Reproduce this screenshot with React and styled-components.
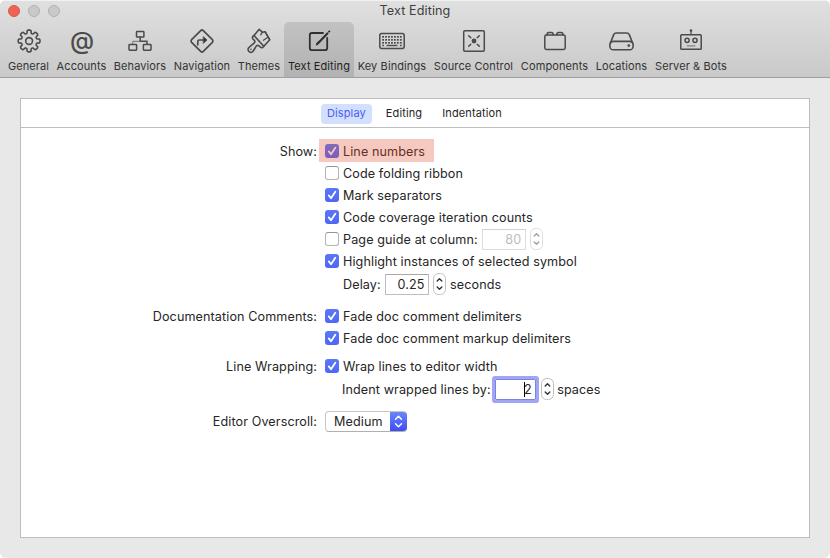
import React from "react";
import styled, { createGlobalStyle, css } from "styled-components";

const Global = createGlobalStyle`
  html, body { margin: 0; padding: 0; background: #fff; }
  * { box-sizing: border-box; }
`;

const Window = styled.div`
  width: 830px;
  height: 558px;
  display: flex;
  flex-direction: column;
  overflow: hidden;
  border-radius: 6px;
  background: #e8e8e8;
  font-family: Inter, "Liberation Sans", sans-serif;
  font-size: 12.6px;
  letter-spacing: 0.1px;
  color: #262626;
  white-space: nowrap;
`;

const Header = styled.header`
  height: 78px;
  flex: none;
  border-top: 1px solid #f2f2f2;
  border-bottom: 1px solid #9f9f9f;
  background: linear-gradient(#e0e0e0, #c9c9c9);
`;

const TitleBar = styled.div`
  height: 21px;
  padding-bottom: 1px;
  display: grid;
  grid-template-columns: 1fr auto 1fr;
  align-items: center;
  color: #404040;
`;

const Lights = styled.div`
  display: flex;
  gap: 8px;
  padding-left: 8px;
`;

const Light = styled.span`
  width: 12px;
  height: 12px;
  border-radius: 50%;
  background: ${(p) => (p.$close ? "#ee6355" : "#c9c9c9")};
  border: 1px solid ${(p) => (p.$close ? "#d9574a" : "#b1b1b1")};
`;

const Title = styled.span`
  line-height: 20px;
`;

const Toolbar = styled.nav`
  display: flex;
  padding-left: 4px;
`;

const ToolItem = styled.div`
  width: ${(p) => p.$width}px;
  height: 55px;
  padding-top: 5px;
  border-radius: 5px 5px 0 0;
  font-size: 11px;
  line-height: 22px;
  letter-spacing: 0.1px;
  color: #333;
  display: flex;
  flex-direction: column;
  ${(p) =>
    p.$selected &&
    css`
      background: linear-gradient(#c2c2c2, #b2b2b2);
      color: #1f1f1f;
    `}
`;

const ToolLabel = styled.span`
  align-self: center;
`;

const Icon = styled.svg`
  width: 28px;
  height: 28px;
  flex: none;
  overflow: visible;
  margin-left: ${(p) => p.$inset}px;
  fill: none;
  stroke: ${(p) => (p.$selected ? "#303030" : "#4b4b4b")};
  stroke-width: 1.6;
  stroke-linejoin: round;
  stroke-linecap: round;
`;

const gearPath = (() => {
  const parts = [];
  const at = (r, deg) => {
    const a = (deg * Math.PI) / 180;
    return `${(15.1 + r * Math.cos(a)).toFixed(2)} ${(14 + r * Math.sin(a)).toFixed(2)}`;
  };
  for (let i = 0; i < 8; i++) {
    const c = i * 45 - 90;
    parts.push(
      `${i ? "L" : "M"}${at(8.1, c - 15)} L${at(10.3, c - 11)} Q${at(10.9, c - 8)} ${at(10.9, c - 4)} L${at(10.9, c + 4)} Q${at(10.9, c + 8)} ${at(10.3, c + 11)} L${at(8.1, c + 15)} Q${at(7.3, c + 22.5)} ${at(8.1, c + 30)}`
    );
  }
  return parts.join(" ") + "Z";
})();

const KEY_COLUMNS = [0, 1, 2, 3, 4, 5, 6];

const icons = {
  general: (
    <>
      <path d={gearPath} />
      <circle cx="15.1" cy="14" r="3.4" />
    </>
  ),
  accounts: (
    <text x="15" y="21.8" textAnchor="middle" fontSize="24.5" fontWeight="500" letterSpacing="0" fill="#4b4b4b" stroke="none">
      @
    </text>
  ),
  behaviors: (
    <g strokeWidth="1.5">
      <rect x="10.5" y="4.6" width="7.4" height="5.4" rx="0.6" />
      <rect x="3" y="17.6" width="7.6" height="5.6" rx="0.6" />
      <rect x="17.4" y="17.6" width="7.6" height="5.6" rx="0.6" />
      <path d="M14.2 10v4M14.2 14.3H21v3" />
      <path d="M14 14.3H6.8v3" strokeWidth="1" opacity="0.7" />
    </g>
  ),
  navigation: (
    <>
      <path strokeWidth="1.7" d="M12.7 3.6Q14 2.4 15.3 3.6L24.4 12.7Q25.6 14 24.4 15.3L15.3 24.4Q14 25.6 12.7 24.4L3.6 15.3Q2.4 14 3.6 12.7Z" />
      <path strokeWidth="1.7" d="M9.8 17.8v-3.2q0-1.6 1.6-1.6H16" />
      <path d="M15.5 9.8L19 13L15.5 16.2Z" fill="currentColor" strokeWidth="0.8" />
    </>
  ),
  themes: (
    <>
      <path d="M9 8.5L14.2 2.3L17.3 5.2L20.2 4.8L24.8 12.8L18.8 19.2Z" />
      <path d="M20.2 4.9L24.7 12.8M17.3 5.3L15.7 7.8M22.2 10.8L18.4 13.2" strokeWidth="1.3" />
      <path d="M9 8.5Q6.4 10.2 8 12L9.6 13.6Q10.4 15.2 8.8 16.4L4.6 19.8C1.2 22.4 4.4 27.2 7.6 24.6C9 23.4 10 20.6 11.6 18.8Q12.6 17.8 14 18.8L15.4 20.2Q17.4 21.6 18.8 19.2" />
      <path d="M6 22.2v.1" />
    </>
  ),
  editing: (
    <>
      <path d="M18 6H7Q4.8 6 4.8 8.2V21Q4.8 23.2 7 23.2H20Q22.2 23.2 22.2 21V11" strokeWidth="1.8" />
      <path d="M13 16.3L22.4 6.5" strokeWidth="2.2" />
      <path d="M11.8 17.4L13.4 15.2M24 4.7L24.4 4.3" strokeWidth="1.9" />
    </>
  ),
  keys: (
    <>
      <rect x="1.8" y="6.6" width="24.4" height="14.8" rx="1.8" strokeWidth="1.5" />
      <g fill="#4b4b4b" stroke="none">
        {[9, 12, 15].map((y) =>
          KEY_COLUMNS.map((c) => <rect key={`${y}-${c}`} x={4.2 + c * 2.95} y={y} width="1.8" height="1.7" />)
        )}
        <rect x="4.2" y="17.8" width="1.8" height="1.4" />
        <rect x="8.5" y="17.8" width="11" height="1.4" />
        <rect x="21.9" y="17.8" width="1.8" height="1.4" />
      </g>
    </>
  ),
  source: (
    <>
      <rect x="4.7" y="3.7" width="20.6" height="20.6" rx="1.2" strokeWidth="1.5" />
      <circle cx="15" cy="14" r="2.4" fill="#4b4b4b" stroke="none" />
      <path d="M9.7 8.7l2.1 2.1M20.3 8.7l-2.1 2.1M9.7 19.3l2.1-2.1M20.3 19.3l-2.1-2.1" strokeWidth="1.5" />
    </>
  ),
  components: (
    <>
      <rect x="4.8" y="8" width="20.4" height="14.4" rx="1.6" strokeWidth="1.5" />
      <path d="M7 8q0-2.4 1.8-2.4h2.6q1.8 0 1.8 2.4M16.8 8q0-2.4 1.8-2.4h2.6q1.8 0 1.8 2.4" strokeWidth="1.5" />
    </>
  ),
  locations: (
    <>
      <rect x="2.9" y="14.4" width="23.2" height="8.4" rx="3.4" />
      <path d="M3.4 16L6.6 7.9Q7.4 6 9.4 6H19.6Q21.6 6 22.4 7.9L25.6 16" />
      <circle cx="21.8" cy="18.6" r="1.4" fill="#4b4b4b" stroke="none" />
    </>
  ),
  bots: (
    <>
      <rect x="3.8" y="7.7" width="20.4" height="14.6" rx="0.8" strokeWidth="1.5" />
      <path d="M14 4v3.6" strokeWidth="1.2" />
      <circle cx="14" cy="3.6" r="1.3" fill="#4b4b4b" stroke="none" />
      <circle cx="10.1" cy="13.3" r="2.1" strokeWidth="1.5" />
      <circle cx="18" cy="13.3" r="2.1" strokeWidth="1.5" />
      <path d="M10.3 18.8h7.6" strokeWidth="1.2" opacity="0.6" />
    </>
  ),
};

const tools = [
  ["General", "general", 49],
  ["Accounts", "accounts", 57],
  ["Behaviors", "behaviors", 60],
  ["Navigation", "navigation", 64],
  ["Themes", "themes", 50],
  ["Text Editing", "editing", 70],
  ["Key Bindings", "keys", 76],
  ["Source Control", "source", 87],
  ["Components", "components", 75],
  ["Locations", "locations", 59],
  ["Server & Bots", "bots", 80],
];

const Panel = styled.main`
  flex: 1;
  margin: 20px 20px 20px;
  border: 1px solid #bdbdbd;
  background: #fff;
`;

const Tabs = styled.div`
  height: 29px;
  padding: 5px 0 0 300px;
  display: flex;
  gap: 8px;
  border-bottom: 1px solid #bdbdbd;
`;

const Tab = styled.span`
  height: 20px;
  padding: 0 6px;
  border-radius: 4px;
  font-size: 11px;
  line-height: 19px;
  letter-spacing: 0.12px;
  color: ${(p) => (p.$active ? "#4a5cf5" : "#262626")};
  background: ${(p) => (p.$active ? "#d2e0fe" : "transparent")};
`;

const Form = styled.div`
  display: flex;
  flex-direction: column;
  padding-top: 12px;
`;

const Row = styled.div`
  display: grid;
  grid-template-columns: 296px auto;
  column-gap: 8px;
  align-items: center;
  height: ${(p) => p.$height || 22}px;
  margin-top: ${(p) => p.$gap || 0}px;
`;

const RowLabel = styled.span`
  text-align: right;
`;

const Controls = styled.div`
  position: relative;
  display: flex;
  align-items: center;
  height: 100%;
  padding-left: ${(p) => p.$indent || 0}px;
`;

const Highlight = styled.span`
  position: absolute;
  left: -6px;
  top: -1px;
  width: 115px;
  height: 23px;
  background: rgba(225, 75, 45, 0.3);
`;

const Box = styled.span`
  width: 14px;
  height: 14px;
  flex: none;
  margin-right: 4px;
  display: flex;
  border-radius: 3px;
  border: ${(p) => (p.$on ? "none" : "1px solid #b4b4b4")};
  border-top-color: #969696;
  background: ${(p) => (p.$on ? "linear-gradient(#5a78f8, #4f66f6)" : "#fff")};
`;

const Check = styled.svg`
  width: 14px;
  height: 14px;
  fill: none;
  stroke: #fff;
  stroke-width: 1.8;
  stroke-linecap: round;
  stroke-linejoin: round;
`;

const Field = styled.span`
  width: 44px;
  height: 21px;
  flex: none;
  margin-left: ${(p) => p.$left}px;
  margin-top: ${(p) => p.$top || 0}px;
  padding-right: 3.5px;
  border: 1px solid ${(p) => (p.$disabled ? "#dcdcdc" : "#bdbdbd")};
  border-top-color: ${(p) => (p.$disabled ? "#d2d2d2" : "#a9a9a9")};
  color: ${(p) => (p.$disabled ? "#bcbcbc" : "#262626")};
  line-height: 19px;
  text-align: right;
  ${(p) =>
    p.$focused &&
    css`
      width: 41px;
      border-color: #7d83dd;
      box-shadow: 0 0 0 3px #a0a6f5;
      border-radius: 1px;
    `}
`;

const Caret = styled.span`
  display: inline-block;
  width: 1px;
  height: 15px;
  margin-right: -1px;
  vertical-align: -3px;
  background: #000;
`;

const StepperSvg = styled.svg`
  width: 13px;
  height: 22px;
  flex: none;
  margin: ${(p) => p.$top || 0}px ${(p) => p.$right || 4}px 0 ${(p) => p.$left}px;
  fill: none;
  stroke-linecap: round;
  stroke-linejoin: round;
`;

const Popup = styled.div`
  width: 82px;
  height: 21px;
  display: flex;
  overflow: hidden;
  border-radius: 4px;
  border: 1px solid #c6c6c6;
  border-bottom-color: #b0b0b0;
  border-right: 0;
  line-height: 19px;
  padding-left: 8px;
  justify-content: space-between;
`;

const PopupArrow = styled.svg`
  width: 17px;
  height: 21px;
  flex: none;
  margin-top: -1px;
  background: linear-gradient(#6a8bfa, #3f48f5);
  fill: none;
  stroke: #fff;
  stroke-width: 1.5;
  stroke-linecap: round;
  stroke-linejoin: round;
`;

function Checkbox({ on }) {
  return (
    <Box $on={on}>
      {on && (
        <Check viewBox="0 0 14 14">
          <path d="M3.8 7.4L6 10.2L10.3 3.8" />
        </Check>
      )}
    </Box>
  );
}

function Stepper({ disabled, left, right, top }) {
  return (
    <StepperSvg viewBox="0 0 13 22" $left={left} $right={right} $top={top}>
      <rect x="0.5" y="0.5" width="12" height="21" rx="5" fill="#fff" stroke={disabled ? "#dedede" : "#bfbfbf"} />
      <path d="M4.2 8L6.5 5.7L8.8 8M4.2 14L6.5 16.3L8.8 14" stroke={disabled ? "#a0a0a0" : "#333"} strokeWidth="1.4" />
    </StepperSvg>
  );
}

function Option({ label, text, on, gap, children, marked }) {
  return (
    <Row $gap={gap}>
      <RowLabel>{label}</RowLabel>
      <Controls>
        <Checkbox on={on} />
        <span>{text}</span>
        {children}
        {marked && <Highlight />}
      </Controls>
    </Row>
  );
}

export default function App() {
  return (
    <>
      <Global />
      <Window>
        <Header>
          <TitleBar>
            <Lights>
              <Light $close />
              <Light />
              <Light />
            </Lights>
            <Title>Text Editing</Title>
          </TitleBar>
          <Toolbar>
            {tools.map(([name, icon, width]) => (
              <ToolItem key={name} $width={width} $selected={icon === "editing"}>
                <Icon viewBox="0 0 28 28" $inset={Math.floor((width - 28) / 2)} $selected={icon === "editing"}>
                  {icons[icon]}
                </Icon>
                <ToolLabel>{name}</ToolLabel>
              </ToolItem>
            ))}
          </Toolbar>
        </Header>
        <Panel>
          <Tabs>
            <Tab $active>Display</Tab>
            <Tab>Editing</Tab>
            <Tab>Indentation</Tab>
          </Tabs>
          <Form>
            <Option label="Show:" text="Line numbers" on marked />
            <Option text="Code folding ribbon" />
            <Option text="Mark separators" on />
            <Option text="Code coverage iteration counts" on />
            <Option text="Page guide at column:">
              <Field $disabled $left={4}>80</Field>
              <Stepper disabled left={4} />
            </Option>
            <Option text="Highlight instances of selected symbol" on />
            <Row $height={24}>
              <RowLabel />
              <Controls $indent={18}>
                <span>Delay:</span>
                <Field $left={4.4} $top={1}>0.25</Field>
                <Stepper left={4} />
                <span>seconds</span>
              </Controls>
            </Row>
            <Option gap={9} label="Documentation Comments:" text="Fade doc comment delimiters" on />
            <Option text="Fade doc comment markup delimiters" on />
            <Option gap={6} label="Line Wrapping:" text="Wrap lines to editor width" on />
            <Row $height={24}>
              <RowLabel />
              <Controls $indent={17}>
                <span>Indent wrapped lines by:</span>
                <Field $focused $left={4.4} $top={1}><Caret />2</Field>
                <Stepper left={5} right={3} />
                <span>spaces</span>
              </Controls>
            </Row>
            <Row $gap={9}>
              <RowLabel>Editor Overscroll:</RowLabel>
              <Controls>
                <Popup>
                  <span>Medium</span>
                  <PopupArrow viewBox="0 0 17 21">
                    <path d="M5.5 8.3L8.5 5.3L11.5 8.3M5.5 12.7L8.5 15.7L11.5 12.7" />
                  </PopupArrow>
                </Popup>
              </Controls>
            </Row>
          </Form>
        </Panel>
      </Window>
    </>
  );
}
